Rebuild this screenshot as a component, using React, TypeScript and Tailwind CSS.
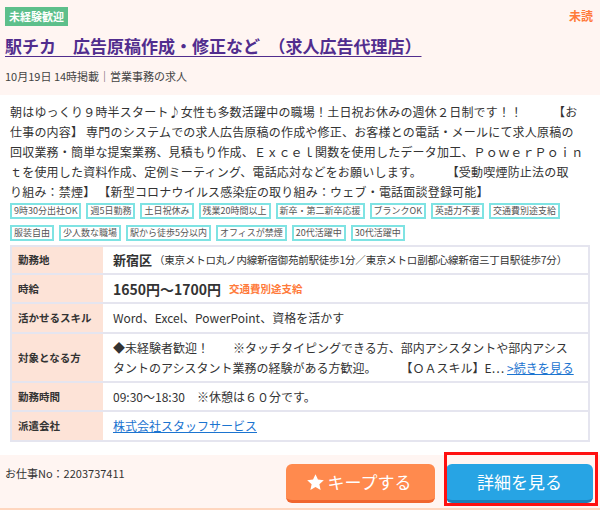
const tags = [
  "9時30分出社OK",
  "週5日勤務",
  "土日祝休み",
  "残業20時間以上",
  "新卒・第二新卒応援",
  "ブランクOK",
  "英語力不要",
  "交通費別途支給",
  "服装自由",
  "少人数な職場",
  "駅から徒歩5分以内",
  "オフィスが禁煙",
  "20代活躍中",
  "30代活躍中",
];

const descLines = [
  "朝はゆっくり９時半スタート♪女性も多数活躍中の職場！土日祝お休みの週休２日制です！！　　　【お",
  "仕事の内容】 専門のシステムでの求人広告原稿の作成や修正、お客様との電話・メールにて求人原稿の",
  "回収業務・簡単な提案業務、見積もり作成、Ｅｘｃｅｌ関数を使用したデータ加工、ＰｏｗｅｒＰｏｉｎ",
  "ｔを使用した資料作成、定例ミーティング、電話応対などをお願いします。　　　【受動喫煙防止法の取",
  "り組み：禁煙】 【新型コロナウイルス感染症の取り組み：ウェブ・電話面談登録可能】",
];

function Row({ label, children, h }: { label: string; children: React.ReactNode; h: string }) {
  return (
    <div className={`flex border-b-2 border-[#e5e5ef] last:border-b-0 ${h}`}>
      <div className="flex w-[91px] shrink-0 items-center bg-[#fde3d7] px-[6px] text-[10.5px] font-bold text-[#333]">
        {label}
      </div>
      <div className="flex flex-1 items-center pl-[10px] pr-[8px] text-[12px] leading-[20px] text-[#333]">{children}</div>
    </div>
  );
}

function StarIcon() {
  return (
    <svg viewBox="0 0 24 24" className="h-[19px] w-[19px]" fill="white">
      <polygon points="12,1.5 15.1,8.3 22.5,9.1 16.9,14.1 18.5,21.5 12,17.7 5.5,21.5 7.1,14.1 1.5,9.1 8.9,8.3" />
    </svg>
  );
}

export default function App() {
  return (
    <div className="relative h-[510px] w-[600px] overflow-hidden bg-white font-['Noto_Sans_CJK_JP','Noto_Sans',sans-serif] text-[#333]">
      {/* header */}
      <div className="relative h-[95px] bg-[#fff5f2] px-[5px] pt-[7px]">
        <div className="w-fit bg-[#5dbf8b] px-[4px] text-[11px] font-bold leading-[19px] text-white">未経験歓迎</div>
        <span className="absolute right-[7px] top-[7px] text-[12px] font-bold leading-[18px] text-[#ff7a3a]">未読</span>
        <div className="mt-[9px] text-[17px] font-bold leading-[22px] text-[#512d8e] underline decoration-[1px] underline-offset-[3px]">
          駅チカ　広告原稿作成・修正など　（求人広告代理店）
        </div>
        <div className="mt-[12px] text-[11px] leading-[15px] text-[#444]">10月19日 14時掲載｜営業事務の求人</div>
      </div>

      {/* body */}
      <div className="px-[10px] pt-[7px]">
        <div className="text-[12px] leading-[20px] tracking-[0.2px] text-[#333]">
          {descLines.map((l) => (
            <div key={l} className="whitespace-nowrap">
              {l}
            </div>
          ))}
        </div>
        <div className="mt-[1px] flex flex-wrap gap-x-[5px] gap-y-[6px]">
          {tags.map((t) => (
            <span key={t} className="border-2 border-[#7fe3e3] px-[2px] text-[9px] leading-[12px] text-[#555]">
              {t}
            </span>
          ))}
        </div>

        <div className="mt-[4px] border-2 border-[#e5e5ef]">
          <Row label="勤務地" h="h-[28px]">
            <span className="text-[13px] font-bold">新宿区</span>
            <span className="ml-[2px] whitespace-nowrap text-[10.5px] tracking-[-0.2px]">（東京メトロ丸ノ内線新宿御苑前駅徒歩1分／東京メトロ副都心線新宿三丁目駅徒歩7分）</span>
          </Row>
          <Row label="時給" h="h-[29px]">
            <span className="text-[14px] font-bold">1650円〜1700円</span>
            <span className="ml-[8px] text-[10.5px] font-bold text-[#ff7a3a]">交通費別途支給</span>
          </Row>
          <Row label="活かせるスキル" h="h-[30px]">Word、Excel、PowerPoint、資格を活かす</Row>
          <Row label="対象となる方" h="h-[49px]">
            <div>
              <div className="whitespace-nowrap">◆未経験者歓迎！　　※タッチタイピングできる方、部内アシスタントや部内アシス</div>
              <div className="whitespace-nowrap">
                タントのアシスタント業務の経験がある方歓迎。　　　【ＯＡスキル】E…{" "}
                <a className="text-[#1b74d0] underline">&gt;続きを見る</a>
              </div>
            </div>
          </Row>
          <Row label="勤務時間" h="h-[29px]">09:30〜18:30　※休憩は６０分です。</Row>
          <Row label="派遣会社" h="h-[28px]">
            <a className="text-[#1b74d0] underline">株式会社スタッフサービス</a>
          </Row>
        </div>
      </div>

      {/* footer */}
      <div className="mt-[13px] flex h-[55px] items-start justify-between border-b-2 border-[#ffd6bf] bg-[#fff5f2] pl-[5px] pr-[7px]">
        <span className="mt-[10px] text-[11px] leading-[16px] text-[#333]">お仕事No：2203737411</span>
        <div className="mt-[9px] flex gap-[11px]">
          <button className="flex h-[39px] w-[149px] items-center justify-center gap-[3px] rounded-[6px] border-b-[3px] border-[#f0652e] bg-[#ff8a4e] pr-[4px] text-[17px] text-white">
            <StarIcon />
            キープする
          </button>
          <button className="flex h-[39px] w-[147px] items-center justify-center rounded-[6px] border-b-[3px] border-[#1e7fb8] bg-[#27a4e4] text-[17px] text-white">
            詳細を見る
          </button>
        </div>
      </div>

      {/* annotation box over the detail button */}
      <div className="absolute left-[444px] top-[452px] h-[54px] w-[154px] border-[3px] border-[#ff1010]" />
    </div>
  );
}
